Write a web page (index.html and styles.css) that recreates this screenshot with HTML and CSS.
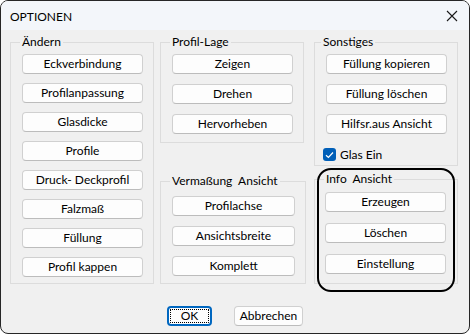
FILE: index.html
```html
<!DOCTYPE html>
<html lang="de">
<head>
  <meta charset="UTF-8">
  <title>Optionen</title>
  <link rel="stylesheet" href="styles.css">
</head>
<body>
  <div class="window">
    <div class="titlebar">
      <span class="title">OPTIONEN</span>
      <span class="close">
        <svg width="12" height="12" viewBox="0 0 12 12"><path d="M1 1 L11 11 M11 1 L1 11" stroke="#1a1a1a" stroke-width="1.1" fill="none"/></svg>
      </span>
    </div>

    <div class="content">
      <div class="columns">
        <fieldset class="group g-aendern">
          <legend>Ändern</legend>
          <div class="buttons">
            <button>Eckverbindung</button>
            <button>Profilanpassung</button>
            <button>Glasdicke</button>
            <button>Profile</button>
            <button>Druck- Deckprofil</button>
            <button>Falzmaß</button>
            <button>Füllung</button>
            <button>Profil kappen</button>
          </div>
        </fieldset>

        <div class="col col-mid">
          <fieldset class="group g-lage">
            <legend>Profil-Lage</legend>
            <div class="buttons">
              <button>Zeigen</button>
              <button>Drehen</button>
              <button>Hervorheben</button>
            </div>
          </fieldset>
          <fieldset class="group g-mass">
            <legend>Vermaßung&nbsp; Ansicht</legend>
            <div class="buttons">
              <button>Profilachse</button>
              <button>Ansichtsbreite</button>
              <button>Komplett</button>
            </div>
          </fieldset>
        </div>

        <div class="col col-right">
          <fieldset class="group g-sonst">
            <legend>Sonstiges</legend>
            <div class="buttons">
              <button>Füllung kopieren</button>
              <button>Füllung löschen</button>
              <button>Hilfsr.aus Ansicht</button>
            </div>
            <label class="check">
              <span class="box">
                <svg width="9" height="8" viewBox="0 0 9 8"><path d="M1 4.2 L3.4 6.5 L8 1.5" stroke="#fff" stroke-width="1.2" fill="none"/></svg>
              </span>
              Glas Ein
            </label>
          </fieldset>
          <div class="annotated">
            <fieldset class="group g-info">
              <legend>Info&nbsp; Ansicht</legend>
              <div class="buttons">
                <button>Erzeugen</button>
                <button>Löschen</button>
                <button>Einstellung</button>
              </div>
            </fieldset>
          </div>
        </div>
      </div>

      <div class="footer">
        <button class="ok">OK</button>
        <button class="cancel">Abbrechen</button>
      </div>
    </div>
  </div>
</body>
</html>
```

FILE: styles.css
```css
body {
  margin: 0;
  background-color: #ffffff;
  font-family: 'Segoe UI', Lato, sans-serif;
  font-size: 12px;
  color: #000;
}

.window {
  width: 470px;
  height: 334px;
  box-sizing: border-box;
  border: 1px solid #262626;
  border-radius: 8px;
  background-color: #f0f0f0;
  overflow: hidden;
}

.titlebar {
  height: 29px;
  background-color: #f3f6fa;
  display: flex;
  align-items: center;
  justify-content: space-between;
  padding: 0 10px 0 9px;
}

.title {
  font-size: 12px;
  padding-top: 1px;
}

.close {
  display: flex;
  margin-right: 1px;
}

.content {
  padding: 5px 0 0 9px;
}

.columns {
  display: flex;
  align-items: flex-start;
}

.col {
  display: flex;
  flex-direction: column;
  width: 146px;
}

.col-mid {
  margin-left: 6px;
}

.col-right {
  margin-left: 8px;
}

.group {
  margin: 0;
  border: 1px solid #dcdcdc;
  box-sizing: border-box;
  width: 144px;
  min-width: 0;
  padding: 5px 10px 6px 11px;
}

.group legend {
  padding: 0 2px;
  margin-left: -2px;
  line-height: 14px;
}

.buttons {
  display: flex;
  flex-direction: column;
  gap: 9px;
}

button {
  font-family: inherit;
  font-size: 12px;
  color: #000;
  height: 20px;
  padding: 0;
  background-color: #fdfdfd;
  border: 1px solid #d0d0d0;
  border-bottom-color: #bcbcbc;
  border-radius: 4px;
  line-height: 16px;
}

.buttons button {
  width: 121px;
}

.g-lage .buttons,
.g-mass .buttons,
.g-sonst .buttons {
  gap: 10px;
}

.g-lage {
  padding-bottom: 8px;
}

.g-mass {
  width: 146px;
  margin-top: 31px;
  padding-top: 8px;
  padding-bottom: 7px;
}

.g-mass .buttons button {
  width: 123px;
}

.g-sonst {
  padding-bottom: 4px;
}

.g-sonst legend {
  margin-left: -5px;
}

.check {
  display: flex;
  align-items: center;
  gap: 4px;
  margin: 14px 0 0 -3px;
  height: 13px;
}

.check .box {
  width: 13px;
  height: 13px;
  border-radius: 3px;
  background-color: #005fb8;
  display: flex;
  align-items: center;
  justify-content: center;
}

.annotated {
  position: relative;
  margin-top: 6px;
}

.annotated::after {
  content: '';
  position: absolute;
  top: -4px;
  left: 3px;
  width: 134px;
  height: 120px;
  border: 2px solid #000;
  border-radius: 14px;
}

.g-info {
  padding: 6px 10px 9px 10px;
}

.g-info legend {
  margin-left: -1px;
}

.g-info .buttons {
  gap: 11px;
}

.footer {
  display: flex;
  justify-content: center;
  gap: 22px;
  margin: 22px 0 0 -9px;
}

.footer button {
  height: 20px;
}

.ok {
  width: 45px;
  border: 2px solid #0067c0;
  outline: 1px dotted #000;
  outline-offset: -4px;
}

.cancel {
  width: 69px;
}
```
